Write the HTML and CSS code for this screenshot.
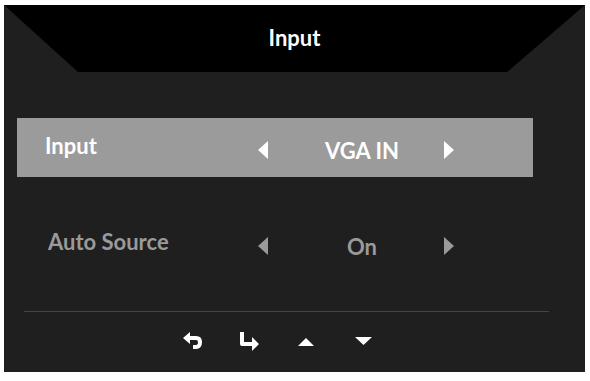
FILE: index.html
```html
<!DOCTYPE html>
<html lang="en">
<head>
<meta charset="UTF-8">
<meta name="viewport" content="width=device-width, initial-scale=1.0">
<title>Input</title>
<link rel="stylesheet" href="styles.css">
</head>
<body>

<div class="panel">
    <div class="banner">
        <h2 class="title">Input</h2>
    </div>

    <div class="rows">
        <div class="row selected">
            <span class="label">Input</span>
            <span class="arrow left"></span>
            <span class="value">VGA IN</span>
            <span class="arrow right"></span>
        </div>
        <div class="row">
            <span class="label">Auto Source</span>
            <span class="arrow left"></span>
            <span class="value">On</span>
            <span class="arrow right"></span>
        </div>
    </div>

    <div class="divider"></div>

    <div class="keys">
        <svg class="key" width="20" height="20" viewBox="0 0 20 20">
            <path d="M0 6 L7 0 L7 4 L13 4 Q19 4 19 10 Q19 17 13 17 L10 17 L10 13 L13 13 Q15 13 15 10 Q15 8 13 8 L7 8 L7 12 Z" fill="#fff"/>
        </svg>
        <svg class="key" width="20" height="20" viewBox="0 0 20 20">
            <path d="M0 0 L4 0 L4 10 L12 10 L12 5 L19 12 L12 19 L12 14 L2 14 Q0 14 0 12 Z" fill="#fff"/>
        </svg>
        <svg class="key" width="20" height="20" viewBox="0 0 20 20">
            <path d="M1 14 L9 6 L17 14 Z" fill="#fff"/>
        </svg>
        <svg class="key" width="20" height="20" viewBox="0 0 20 20">
            <path d="M1 5 L18 5 L9.5 13 Z" fill="#fff"/>
        </svg>
    </div>
</div>

</body>
</html>
```

FILE: styles.css
```css
body {
    font-family: Lato, "Open Sans", sans-serif;
    background-color: #fff;
    margin: 0;
}
.panel {
    margin: 5px 0 0 4px;
    width: 581px;
    height: 367px;
    background: #201f20;
    overflow: hidden;
}
.banner {
    height: 67px;
    background: #000;
    clip-path: polygon(0 0, 100% 0, calc(100% - 78px) 100%, 74px 100%);
    display: flex;
    justify-content: center;
    align-items: center;
}
.title {
    margin: 0;
    color: #fff;
    font-size: 22px;
    font-weight: bold;
    padding-bottom: 2px;
}
.rows {
    padding: 46px 0 0 13px;
}
.row {
    width: 516px;
    height: 59px;
    display: flex;
    align-items: center;
    color: #9a9a9a;
    font-size: 22px;
    font-weight: bold;
}
.row + .row {
    margin-top: 37px;
}
.row.selected {
    background: #9b9b9b;
    color: #fff;
}
.label {
    width: 213px;
    padding-left: 28px;
    padding-bottom: 4px;
}
.row + .row .label {
    width: 210px;
    padding-left: 31px;
}
.value {
    width: 164px;
    padding-left: 12px;
    text-align: center;
    padding-top: 5px;
}
.arrow {
    width: 0;
    height: 0;
    border-top: 9.5px solid transparent;
    border-bottom: 9.5px solid transparent;
    margin-top: 4px;
}
.arrow.left {
    border-right: 10px solid currentColor;
}
.arrow.right {
    border-left: 10px solid currentColor;
}
.divider {
    margin: 38px 0 0 20px;
    width: 525px;
    height: 1px;
    background: #444;
}
.keys {
    display: flex;
    gap: 37px;
    padding-left: 179px;
    margin-top: 20px;
}
```
